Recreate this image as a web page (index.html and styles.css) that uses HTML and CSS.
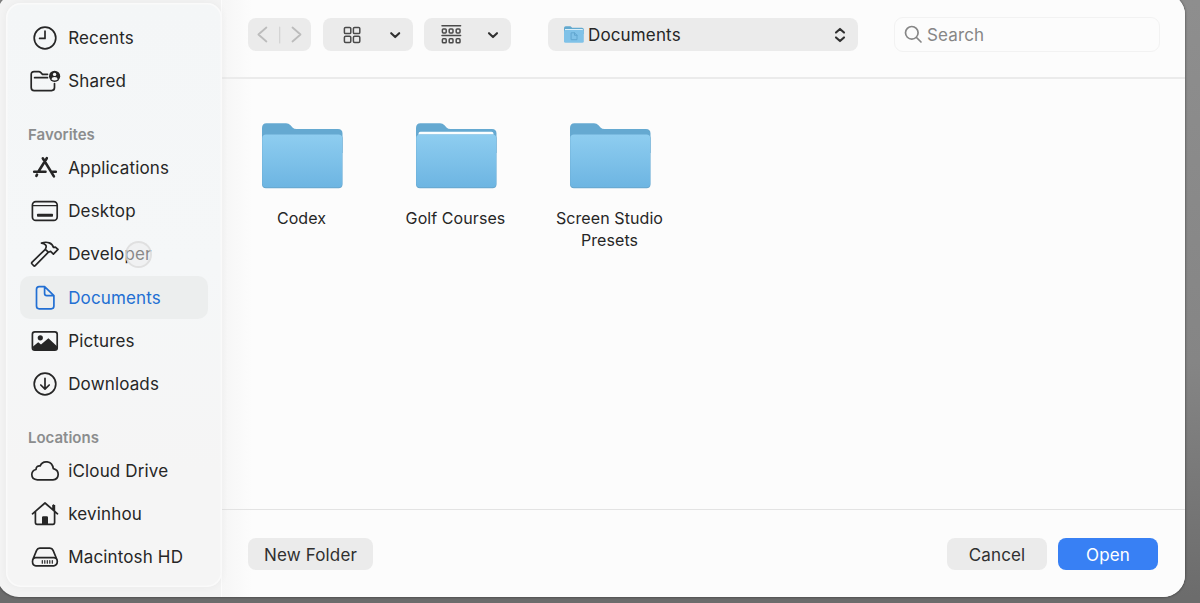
FILE: index.html
```html
<!DOCTYPE html>
<html lang="en">
<head>
    <meta charset="UTF-8">
    <title>Open</title>
    <link rel="stylesheet" href="styles.css">
</head>
<body>
    <div class="dialog">
        <aside class="sidebar">
            <div class="item">
                <svg class="icon" viewBox="0 0 28 28"><circle cx="14" cy="14" r="10.8"/><path d="M14 7.2V14.4H8.6"/></svg>
                <span>Recents</span>
            </div>
            <div class="item">
                <svg class="icon" viewBox="0 0 28 28"><path d="M16.5 7.3H11.5L9.6 5.4Q8.8 4.7 7.8 4.7H3Q.2 4.7.2 7.5V20.5Q.2 23.6 3.2 23.6H20.6Q23.5 23.6 23.5 20.6V16.6M3.6 10.7H16.5"/><circle class="solid" cx="23.6" cy="9.3" r="5.6"/><circle class="light" cx="23.6" cy="7.4" r="1.7"/><path class="light" d="M20.4 12.2Q20.8 9.9 23.6 9.9T26.8 12.2Q25.5 13.4 23.6 13.4T20.4 12.2Z"/></svg>
                <span>Shared</span>
            </div>
            <h2 class="section"><span>Favorites</span></h2>
            <div class="item">
                <svg class="icon" viewBox="0 0 28 28"><path class="thick" d="M11.8 4.3L22.9 22.4M15.8 4.2L7.6 17.2M3.2 17.7H14.5M20.3 17.7H24.8M6 20.7L5.4 21.8"/></svg>
                <span>Applications</span>
            </div>
            <div class="item">
                <svg class="icon" viewBox="0 0 28 28"><rect x="1.4" y="4.6" width="24.8" height="18.8" rx="3.4"/><path class="thin" d="M2 8.6H26"/><rect class="solid" x="6" y="16.7" width="16" height="3.1" rx=".8"/></svg>
                <span>Desktop</span>
            </div>
            <div class="item">
                <svg class="icon" viewBox="0 0 28 28"><path d="M14.3 9.3L.9 22.3Q.3 23 .9 23.8L2.7 25.8Q3.5 26.4 4.2 25.7L17.4 12.2M14.3 9.3L17.4 12.2L19.6 11.4L22.4 14.1L27 9.4L24.4 7.1L22.5 7.4C21.3 3.2 16.3 1 10.5 3.1C14.3 3.7 15.9 5.5 14.9 7.8Z"/></svg>
                <span>Developer</span>
                <i class="pointer"></i>
            </div>
            <div class="item active">
                <svg class="icon" viewBox="0 0 28 28"><path d="M13.6 2.7H8.1Q5.5 2.7 5.5 5.4V22.1Q5.5 24.8 8.2 24.8H20.2Q22.9 24.8 22.9 22.1V11.6ZM13.6 2.7V9.4Q13.6 11.6 15.8 11.6H22.9"/></svg>
                <span>Documents</span>
            </div>
            <div class="item">
                <svg class="icon" viewBox="0 0 28 28"><rect x="1.4" y="4.8" width="24.8" height="18.4" rx="2.4"/><circle class="solid" cx="9.3" cy="10.8" r="2.6"/><path class="solid" d="M2 19.4L7.2 15.3L10 17.6L17.4 11.2L26 19.2V21.2Q26 23 24 23H3.6Q2 23 2 21.2Z"/></svg>
                <span>Pictures</span>
            </div>
            <div class="item">
                <svg class="icon" viewBox="0 0 28 28"><circle cx="14" cy="14" r="10.8"/><path d="M14 8.3V19M9.8 15L14 19.2L18.2 15"/></svg>
                <span>Downloads</span>
            </div>
            <h2 class="section"><span>Locations</span></h2>
            <div class="item">
                <svg class="icon" viewBox="0 0 28 28"><path d="M6.4 22.8Q.8 22.4.8 17.5Q.9 13.5 5 12.5Q5.1 8.5 9.2 8.9C11.5 3 21.2 3.1 22.3 11.7Q27.2 12.9 27.2 17.4Q27 22.4 22 22.8Z"/></svg>
                <span>iCloud Drive</span>
            </div>
            <div class="item">
                <svg class="icon" viewBox="0 0 28 28"><path d="M1.5 13.8L14 3L26.5 13.8M4.4 11.8V22.6Q4.4 24.3 6.1 24.3H21.9Q23.6 24.3 23.6 22.6V11.8M22.5 10V5.2"/><path class="solid" d="M21.3 5H24.2V11.5L21.3 9ZM11 24V17.4Q11 16.2 12.2 16.2H15.8Q17 16.2 17 17.4V24Z"/></svg>
                <span>kevinhou</span>
            </div>
            <div class="item">
                <svg class="icon" viewBox="0 0 28 28"><path d="M1.6 17L5.6 7.4Q6.5 5.1 8.8 5.1H18.9Q21.2 5.1 22.1 7.4L26.1 17M5 14.7H22.8Q26.3 14.9 26.3 18.6T22.8 22.9H5Q1.5 22.6 1.5 18.6T5 14.7Z"/><path class="thin" d="M11.3 17.6V20.2M13.8 17.6V20.2M16.3 17.6V20.2M18.8 17.6V20.2M21.3 17.6V20.2"/></svg>
                <span>Macintosh HD</span>
            </div>
        </aside>

        <main class="main">
            <header class="toolbar">
                <div class="control nav">
                    <svg width="63" height="33" viewBox="0 0 63 33"><path d="M18.4 9.5L10.4 16.5L18.4 23.5M44.5 9.5L52.5 16.5L44.5 23.5"/><path class="divider" d="M31.7 9V25"/></svg>
                </div>
                <div class="control view">
                    <svg width="90" height="33" viewBox="0 0 90 33"><g class="shapes"><rect x="21.4" y="9.4" width="6.4" height="6.2" rx="1.2"/><rect x="30.4" y="9.4" width="6.4" height="6.2" rx="1.2"/><rect x="21.4" y="18.2" width="6.4" height="6.2" rx="1.2"/><rect x="30.4" y="18.2" width="6.4" height="6.2" rx="1.2"/></g><path class="chevron" d="M68.2 15.2L72.2 19.1L76.2 15.2"/></svg>
                </div>
                <div class="control group">
                    <svg width="87" height="33" viewBox="0 0 87 33"><g class="shapes"><path d="M18 7.7H36.6M18 17.6H36.6"/><rect x="18.4" y="10.9" width="3.8" height="4" rx=".9"/><rect x="25.2" y="10.9" width="3.8" height="4" rx=".9"/><rect x="32.2" y="10.9" width="3.8" height="4" rx=".9"/><rect x="18.4" y="20.8" width="3.8" height="4" rx=".9"/><rect x="25.2" y="20.8" width="3.8" height="4" rx=".9"/><rect x="32.2" y="20.8" width="3.8" height="4" rx=".9"/></g><path class="chevron" d="M65 15.2L69 19.1L73 15.2"/></svg>
                </div>
                <div class="control path">
                    <svg width="20" height="17" viewBox="0 0 20 17"><path fill="#62a9cf" d="M0 2Q0 .3 1.8.3H6.5L8.2 1.8H18Q19.8 1.8 19.8 3.6V8H0Z"/><path fill="#d9eef8" d="M1 3H18.8V6H1Z"/><rect y="3.9" width="19.8" height="12.8" rx="1.5" fill="#80c2e8"/><path fill="none" stroke="#62a7d0" d="M7.5 6.8H10.5L13 9.3V13.7H7.5ZM10.5 6.8V9.3H13"/></svg>
                    <span>Documents</span>
                    <svg class="updown" width="12" height="16" viewBox="0 0 12 16"><path d="M2 5.6L6 1.9L10 5.6M2 10.4L6 14.1L10 10.4"/></svg>
                </div>
                <div class="search">
                    <svg width="19" height="19" viewBox="0 0 19 19"><circle cx="7.8" cy="7.8" r="6.3"/><path d="M12.5 12.5L17 17"/></svg>
                    <span>Search</span>
                </div>
            </header>

            <section class="files">
                <div class="file">
                    <svg width="82" height="66" viewBox="0 0 82 66"><use href="#folder-back"/><use href="#folder-front"/></svg>
                    <span class="name">Codex</span>
                </div>
                <div class="file">
                    <svg width="82" height="66" viewBox="0 0 82 66"><use href="#folder-back"/><rect x="3.5" y="8.8" width="75" height="10" rx="2" fill="#fbfeff"/><use href="#folder-front"/></svg>
                    <span class="name">Golf Courses</span>
                </div>
                <div class="file">
                    <svg width="82" height="66" viewBox="0 0 82 66"><use href="#folder-back"/><use href="#folder-front"/></svg>
                    <span class="name">Screen Studio<br>Presets</span>
                </div>
            </section>

            <footer class="footer">
                <button class="new-folder"><span>New Folder</span></button>
                <button class="cancel"><span>Cancel</span></button>
                <button class="open"><span>Open</span></button>
            </footer>
        </main>
    </div>

    <svg class="defs" width="0" height="0">
        <defs>
            <linearGradient id="front" x1="0" y1="0" x2="0" y2="1">
                <stop offset="0" stop-color="#8ecdf0"/>
                <stop offset="1" stop-color="#6db5e2"/>
            </linearGradient>
            <path id="folder-back" fill="#65a9d1" d="M1 5Q1 .3 5.5 .3H25Q27.7.3 29.5 2.2L31.5 4.4Q33.1 6 35.5 6H77Q81.5 6 81.5 10.5V30H1Z"/>
            <g id="folder-front">
                <rect x="1" y="11.6" width="80.5" height="53.6" rx="4" fill="#67a6cd"/>
                <rect x="1.3" y="11.6" width="79.9" height="52.6" rx="3.7" fill="url(#front)"/>
            </g>
        </defs>
    </svg>
</body>
</html>
```

FILE: styles.css
```css
* {
    box-sizing: border-box;
}
body {
    margin: 0;
    height: 603px;
    overflow: hidden;
    font-family: Inter, "Liberation Sans", sans-serif;
    font-size: 17px;
    letter-spacing: 0.15px;
    color: #262626;
    background: linear-gradient(to bottom, #8e8e8e, #858585 60%, #6c6c6c 99%);
}
.dialog {
    display: flex;
    width: 1188px;
    height: 604px;
    margin: -7px 0 0 -3px;
    padding: 7px 0 0 3px;
    border-radius: 22px;
    background: linear-gradient(to right, #f3f3f3 224px, #fcfcfc 224px);
    box-shadow: 0 0 2px 1px rgba(0, 0, 0, 0.25);
    overflow: hidden;
}
.sidebar {
    position: relative;
    z-index: 1;
    flex: none;
    width: 216px;
    height: 584px;
    margin: 3px 0 0 6px;
    padding: 13.4px 14px 0;
    border-radius: 15px;
    background: linear-gradient(#f4f6f7, #f5f7f8 45%, #f5f5f5 80%);
    box-shadow: inset 0 0 0 1.5px #fafafa, 0 0 7px 1px rgba(0, 0, 0, 0.035);
}
.item {
    position: relative;
    display: flex;
    align-items: center;
    gap: 9.2px;
    height: 43.25px;
    padding-left: 11px;
    border-radius: 10px;
    white-space: nowrap;
}
.active {
    color: #226fd3;
    background: #eceeee;
}
.icon {
    flex: none;
    width: 28px;
    height: 28px;
    overflow: visible;
    fill: none;
    stroke: currentColor;
    stroke-width: 1.7;
    stroke-linecap: round;
    stroke-linejoin: round;
}
.icon .solid {
    fill: currentColor;
    stroke: none;
}
.icon .light {
    fill: #f4f6f7;
    stroke: none;
}
.icon .thick {
    stroke-width: 2.6;
}
.icon .thin {
    stroke-width: 1.2;
}
.pointer {
    position: absolute;
    left: 105px;
    top: 8px;
    width: 27px;
    height: 27px;
    border: 2px solid rgba(215, 215, 215, 0.65);
    border-radius: 50%;
    background: rgba(236, 236, 236, 0.5);
}
.section {
    height: 43.25px;
    margin: 0;
    padding: 21px 0 0 8px;
    font-size: 15px;
    letter-spacing: 0;
    line-height: 22px;
    font-weight: 600;
    color: #8b8d8e;
}
.main {
    display: flex;
    flex: 1;
    flex-direction: column;
    background: linear-gradient(to right, #f6f6f6, #fcfcfc 30px);
}
.toolbar {
    display: flex;
    align-items: center;
    height: 79px;
    padding: 0 26px 8px;
    border-bottom: 2px solid #ebebeb;
}
.control {
    display: flex;
    align-items: center;
    height: 33px;
    border-radius: 8px;
    background: #ebebeb;
}
.control svg {
    flex: none;
    fill: none;
    stroke-linecap: round;
    stroke-linejoin: round;
}
.nav {
    width: 63px;
    margin-right: 12px;
    stroke: #bcbcbc;
    stroke-width: 1.8;
}
.nav .divider {
    stroke: #d2d2d2;
    stroke-width: 1.2;
}
.view {
    width: 90px;
    margin-right: 11px;
}
.group {
    width: 87px;
    margin-right: 36.5px;
}
.shapes {
    stroke: #4a4a4a;
    stroke-width: 1.5;
}
.chevron,
.updown {
    stroke: #303030;
    stroke-width: 2.1;
}
.path {
    width: 310.5px;
    margin-right: 36px;
    padding: 0 12.5px 0 16.5px;
    gap: 4px;
}
.updown {
    margin-left: auto;
}
.search {
    display: flex;
    align-items: center;
    gap: 4px;
    width: 266px;
    height: 35px;
    padding-left: 9px;
    border: 1px solid #f2f2f2;
    border-radius: 9px;
    color: #868686;
}
.search svg {
    fill: none;
    stroke: #868686;
    stroke-width: 1.7;
    stroke-linecap: round;
}
.files {
    display: flex;
    flex: 1;
    padding: 44px 0 0 2.5px;
}
.file {
    display: flex;
    flex-direction: column;
    align-items: center;
    width: 154px;
    font-size: 16px;
    letter-spacing: 0.08px;
    line-height: 22px;
    text-align: center;
}
.name {
    margin-top: 18px;
}
.footer {
    display: flex;
    align-items: center;
    gap: 11px;
    height: 88px;
    padding: 1px 27px 0 26px;
    border-top: 1px solid #e3e3e3;
}
button {
    width: 100px;
    height: 32px;
    padding: 1px 0 0;
    border: none;
    border-radius: 8px;
    font: inherit;
    letter-spacing: inherit;
    color: #303030;
    background: #ebebeb;
}
.new-folder {
    width: 125px;
    margin-right: auto;
}
.open {
    margin-right: 1px;
    color: #fff;
    background: #3880f4;
}
.defs {
    position: absolute;
}
```
